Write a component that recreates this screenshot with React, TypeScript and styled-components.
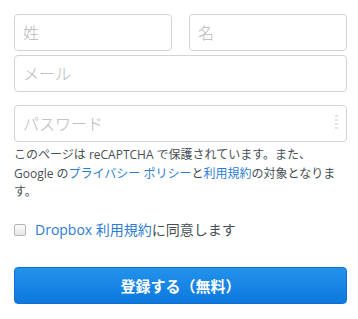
import React from "react";
import styled, { createGlobalStyle } from "styled-components";

const Global = createGlobalStyle`
  html, body { margin: 0; padding: 0; background: #fff; }
  body { font-family: "Open Sans", "Noto Sans CJK JP", sans-serif; }
`;

const Form = styled.form`
  width: 333px;
  padding: 14px 0 0 14px;
  display: flex;
  flex-direction: column;
`;

const NameRow = styled.div`
  display: flex;
  gap: 17px;
  margin-bottom: 4px;
`;

const Field = styled.div<{ $mb?: number }>`
  position: relative;
  flex: 1;
  margin-bottom: ${(p) => p.$mb ?? 0}px;
`;

const Input = styled.input`
  box-sizing: border-box;
  width: 100%;
  height: 37px;
  border: 1px solid #d4d4d4;
  border-radius: 4px;
  padding: 0 8px;
  font-family: "Open Sans", "Noto Sans CJK JP", sans-serif;
  font-size: 16px;
  font-weight: 300;
  color: #333;
  outline: none;
  &::placeholder { color: #b8b8b8; }
`;

const Dots = styled.span`
  position: absolute;
  right: 9px;
  top: 10px;
  width: 3px;
  height: 15px;
  background: repeating-linear-gradient(to bottom, #dde3ea 0 2px, transparent 2px 4px);
`;

const Notice = styled.p`
  margin: 0;
  font-size: 12px;
  line-height: 18.5px;
  color: #474f55;
  width: 333px;
`;

const Link = styled.a`
  color: #2b7cd3;
  text-decoration: none;
`;

const CheckRow = styled.label`
  display: flex;
  align-items: center;
  gap: 9px;
  margin-top: 18px;
  font-size: 14px;
  line-height: 20px;
  color: #474f55;
`;

const Box = styled.span`
  box-sizing: border-box;
  width: 12px;
  height: 12px;
  border: 1px solid #b5b5b5;
  border-radius: 2px;
  background: linear-gradient(#fbfbfb, #e6e6e6);
`;

const Submit = styled.button`
  margin-top: 27px;
  height: 37px;
  width: 333px;
  border: 1px solid #0d70d0;
  border-radius: 4px;
  background: linear-gradient(#2293ec, #0e78dd);
  color: #fff;
  font-family: "Open Sans", "Noto Sans CJK JP", sans-serif;
  font-size: 15px;
  font-weight: 700;
`;

export default function App() {
  return (
    <>
      <Global />
      <Form onSubmit={(e) => e.preventDefault()}>
        <NameRow>
          <Field><Input placeholder="姓" /></Field>
          <Field><Input placeholder="名" /></Field>
        </NameRow>
        <Field $mb={13}><Input placeholder="メール" /></Field>
        <Field $mb={4}>
          <Input type="password" placeholder="パスワード" />
          <Dots />
        </Field>
        <Notice>
          このページは reCAPTCHA で保護されています。また、Google の<Link href="#">プライバシー ポリシー</Link>と<Link href="#">利用規約</Link>の対象となります。
        </Notice>
        <CheckRow>
          <Box />
          <span><Link href="#">Dropbox 利用規約</Link>に同意します</span>
        </CheckRow>
        <Submit type="submit">登録する（無料）</Submit>
      </Form>
    </>
  );
}
